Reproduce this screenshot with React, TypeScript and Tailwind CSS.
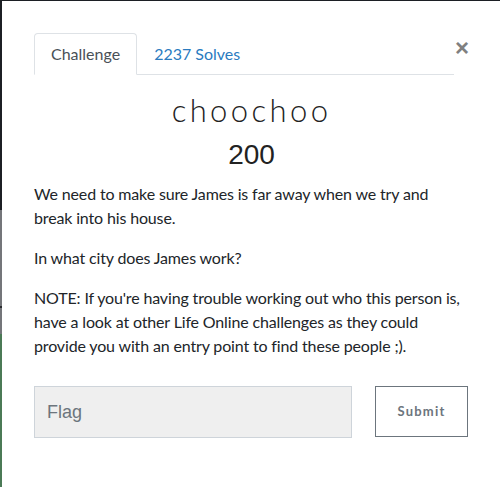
import React, { useState } from "react";

const paragraphs = [
  "We need to make sure James is far away when we try and break into his house.",
  "In what city does James work?",
  "NOTE: If you're having trouble working out who this person is, have a look at other Life Online challenges as they could provide you with an entry point to find these people ;).",
];

export default function App() {
  const [tab, setTab] = useState("challenge");
  const [flag, setFlag] = useState("");

  return (
    <div className="flex h-[487px] w-[500px] flex-col overflow-hidden bg-white font-['Lato',sans-serif]">
      {/* backdrop edge */}
      <div className="h-px w-full shrink-0 bg-[#1c1f24]" />
      <div className="flex flex-1">
        <div className="flex w-[2px] shrink-0 flex-col">
          <div className="h-[209px] bg-[#1c1f24]" />
          <div className="h-[96px] bg-[#74767a]" />
          <div className="h-[2px] bg-[#2a2c30]" />
          <div className="h-[26px] bg-[#74767a]" />
          <div className="flex-1 bg-[#4b7a56]" />
        </div>

        {/* modal */}
        <div className="w-[498px] pl-[32px] pt-[32px]">
          <div className="flex items-start">
            <ul className="flex w-[420px] shrink-0 border-b border-[#dee2e6]">
              <li className="-mb-px">
                <button
                  onClick={() => setTab("challenge")}
                  className="block rounded-t-[4px] border border-b-white border-[#dee2e6] bg-white px-4 py-2 text-[16px] leading-6 text-[#495057]"
                >
                  Challenge
                </button>
              </li>
              <li className="-mb-px">
                <button
                  onClick={() => setTab("solves")}
                  className="block border border-transparent px-4 py-2 text-[16px] leading-6 text-[#2a7bbf]"
                >
                  2237 Solves
                </button>
              </li>
            </ul>
            <button className="ml-[1px] mt-[3px] font-['Liberation_Sans',sans-serif] text-[24px] font-bold leading-6 text-[#808080]">
              ×
            </button>
          </div>

          <div className="w-[435px]">
            <h2 className="mt-[17px] text-center text-[31px] font-light leading-[36px] tracking-[3.4px] text-[#222]">
              choochoo
            </h2>
            <h3 className="mt-[10px] text-center font-['Liberation_Sans',sans-serif] text-[28px] leading-[34px] text-[#222]">
              200
            </h3>
            <div className="mt-[10px] text-[16px] leading-6 tracking-[-0.15px] text-[#212529]">
              {paragraphs.map((p) => (
                <p key={p} className="mb-4">
                  {p}
                </p>
              ))}
            </div>

            <div className="mt-[28px] flex gap-[23px]">
              <input
                value={flag}
                onChange={(e) => setFlag(e.target.value)}
                placeholder="Flag"
                className="h-[52px] w-[318px] border border-[#ced4da] bg-[#efefef] px-[12px] font-['Liberation_Sans',sans-serif] text-[18px] text-[#495057] outline-none placeholder:text-[#6c757d]"
              />
              <button className="h-[51px] w-[93px] border border-[#6c757d] bg-white text-[13px] font-bold tracking-[1.2px] text-[#6c757d]">
                Submit
              </button>
            </div>
          </div>
        </div>
      </div>
    </div>
  );
}
